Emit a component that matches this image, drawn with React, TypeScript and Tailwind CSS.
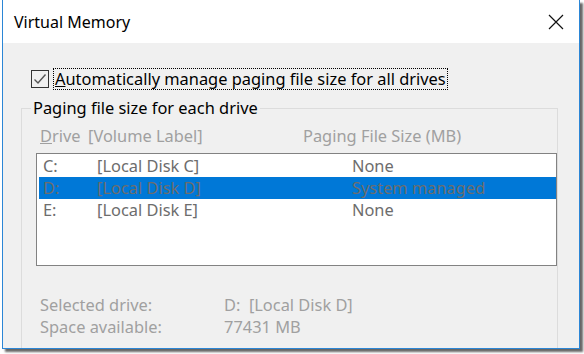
import React from "react";

const font = { fontFamily: '"Noto Sans", "Open Sans", sans-serif' };

function Row({ d, l, s, sel }: { d: string; l: string; s: string; sel?: boolean }) {
  return (
    <div className={`flex h-[22px] items-center leading-[22px] ${sel ? "bg-[#0078d7]" : ""}`}>
      <span className="w-[58px] pl-[4px]">{d}</span>
      <span className="w-[255px]">{l}</span>
      <span>{s}</span>
    </div>
  );
}

export default function App() {
  return (
    <div className="w-[584px] h-[354px] bg-white overflow-hidden text-[16.4px]" style={font}>
      <div className="ml-[2px] w-[578px] h-[349px] overflow-hidden border-l border-r border-b border-[#2b86d6] bg-[#f0f0f0] flex flex-col shadow-[3px_3px_2px_rgba(0,0,0,0.6)]">
        <div className="h-[43px] shrink-0 bg-white flex items-center justify-between pl-[11px] pr-[15px]">
          <span className="text-[16px] text-black">Virtual Memory</span>
          <svg width="16" height="16" viewBox="0 0 16 16">
            <path d="M1 1 L15 15 M15 1 L1 15" stroke="#111" strokeWidth="1.2" fill="none" />
          </svg>
        </div>
        <div className="flex flex-col shrink-0 pl-[18px]">
          <div className="mt-[25px] flex items-center h-[22px]">
            <div className="ml-[10px] w-[18px] h-[18px] border border-[#333] bg-[#f0f0f0] flex items-center justify-center">
              <svg width="14" height="14" viewBox="0 0 14 14">
                <path d="M1.5 7.5 L5 11 L12.5 2.5" stroke="#555" strokeWidth="1.4" fill="none" />
              </svg>
            </div>
            <div className="ml-[4px] h-[22px] border border-dotted border-black flex items-center px-[1px] leading-[20px] text-black">
              <span><span className="underline">A</span>utomatically manage paging file size for all drives</span>
            </div>
          </div>
          <fieldset className="mt-[7px] w-[537px] border border-[#dcdcdc] pb-[40px]">
            <legend className="ml-[9px] px-[2px] leading-[22px] text-black">Paging file size for each drive</legend>
            <div className="pl-[14px]">
              <div className="mt-[6px] flex h-[22px] items-center leading-[22px] text-[#a0a0a0]">
                <span className="pl-[4px] w-[52px]"><span className="underline">D</span>rive</span>
                <span className="w-[215px]">[Volume Label]</span>
                <span>Paging File Size (MB)</span>
              </div>
              <div className="mt-[6px] h-[113px] border border-[#828282] bg-white pt-[1px] pl-[2px] text-[#6d6d6d]">
                <Row d="C:" l="[Local Disk C]" s="None" />
                <Row d="D:" l="[Local Disk D]" s="System managed" sel />
                <Row d="E:" l="[Local Disk E]" s="None" />
              </div>
              <div className="mt-[28px] text-[#a0a0a0] leading-[22px]">
                <div className="flex h-[22px] items-center">
                  <span className="pl-[4px] w-[188px]">Selected drive:</span>
                  <span>D:&nbsp; [Local Disk D]</span>
                </div>
                <div className="flex h-[22px] items-center">
                  <span className="pl-[4px] w-[188px]">Space available:</span>
                  <span>77431 MB</span>
                </div>
              </div>
            </div>
          </fieldset>
        </div>
      </div>
    </div>
  );
}
